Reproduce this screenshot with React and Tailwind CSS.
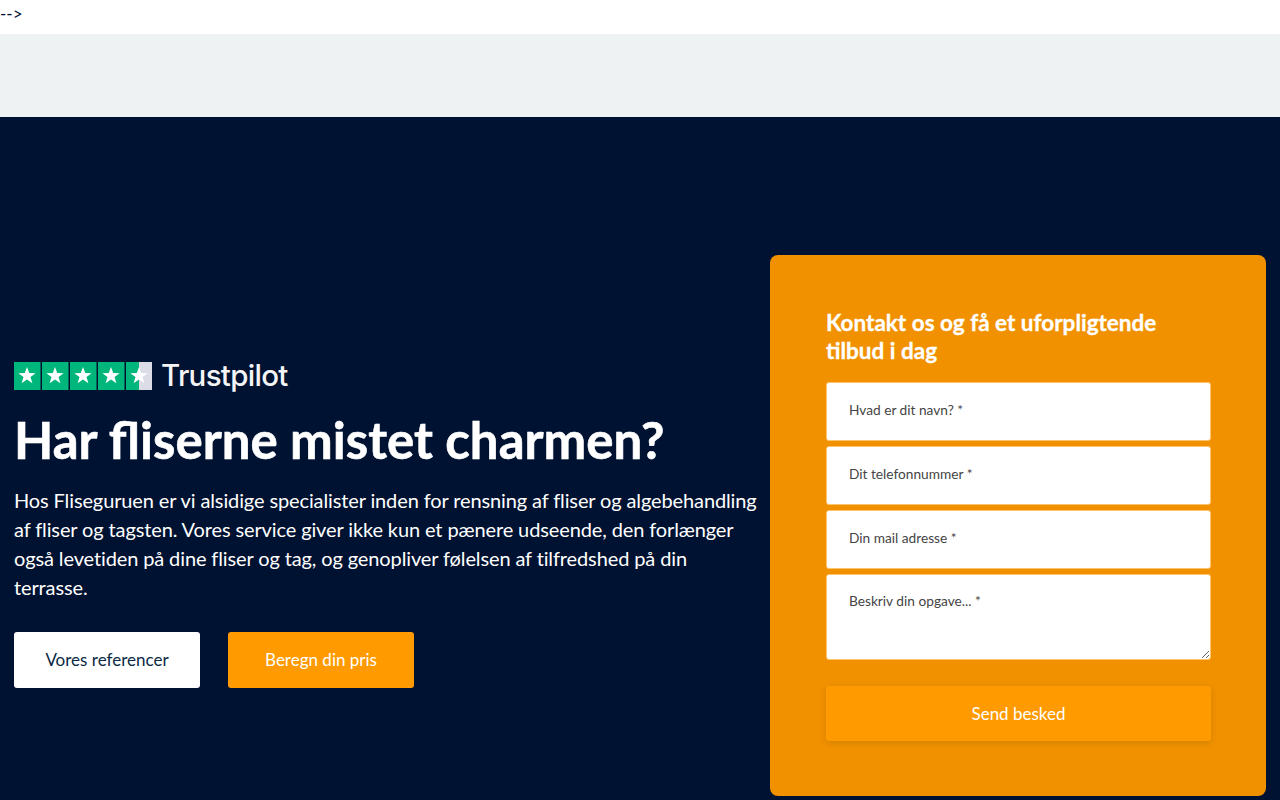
import React from 'react';

const STAR = 'M0 -9 L2.2 -2.9 L8.6 -2.8 L3.5 1.1 L5.4 7.3 L0 3.6 L-5.4 7.3 L-3.5 1.1 L-8.6 -2.8 L-2.2 -2.9 Z';

const TrustpilotStars = () => (
  <svg width="138" height="28" viewBox="0 0 138 28" className="block">
    {[0, 28, 56, 84, 112].map((x) => (
      <g key={x}>
        <rect x={x} y="0" width="26.5" height="28" fill="#00b67a" />
        {x === 112 && <rect x="125" y="0" width="13" height="28" fill="#dcdce6" />}
        <path d={STAR} transform={`translate(${x + 13} 14)`} fill="#fff" />
      </g>
    ))}
  </svg>
);

const Field = ({ placeholder }) => (
  <input
    type="text"
    placeholder={placeholder}
    className="block w-full h-[59px] px-[22px] pb-[5px] bg-white rounded-[3px] border border-[#ffc56b] text-[13.7px] outline-none placeholder:text-[#444444]"
  />
);

export default function App() {
  return (
    <div className="font-['Lato',sans-serif] text-[#001231]">
      <div className="h-[34px] bg-white text-[17px] leading-[28px]">--&gt;</div>
      <div className="h-[83px] bg-[#eef2f3]"></div>

      <section className="bg-[#001231] flex items-center pl-[14px] pr-[14px] pt-[138px] pb-[50px]">
        <div className="w-[756px] shrink-0 pb-[2px] text-white">
          <div className="flex items-center gap-[9px] h-[28px]">
            <TrustpilotStars />
            <span className="font-['Inter',sans-serif] font-medium text-[29.5px] leading-none tracking-[-0.7px] text-[#f4f4f6]">Trustpilot</span>
          </div>
          <h1 className="mt-[21px] text-[51px] leading-[58px] font-bold [-webkit-text-stroke:0.6px_white]">Har fliserne mistet charmen?</h1>
          <p className="mt-[17px] w-[746px] text-[20px] leading-[29px] tracking-[-0.12px]">
            Hos Fliseguruen er vi alsidige specialister inden for rensning af fliser og algebehandling af fliser og tagsten. Vores service giver ikke kun et pænere udseende, den forlænger også levetiden på dine fliser og tag, og genopliver følelsen af tilfredshed på din terrasse.
          </p>
          <div className="mt-[30px] flex gap-[28px]">
            <a className="w-[186px] h-[56px] flex items-center justify-center bg-white text-[#0b2a45] rounded-[3px] text-[17px]">Vores referencer</a>
            <a className="w-[186px] h-[56px] flex items-center justify-center bg-[#ff9a00] text-white rounded-[3px] text-[17px]">Beregn din pris</a>
          </div>
        </div>

        <div className="w-[496px] h-[541px] shrink-0 bg-[#f19100] rounded-[8px] pl-[56px] pr-[55px] pt-[54px]">
          <h2 className="text-[22.5px] leading-[28px] font-bold text-white [-webkit-text-stroke:0.3px_white]">Kontakt os og få et uforpligtende tilbud i dag</h2>
          <form className="mt-[17px] flex flex-col gap-[5px]">
            <Field placeholder="Hvad er dit navn? *" />
            <Field placeholder="Dit telefonnummer *" />
            <Field placeholder="Din mail adresse *" />
            <textarea
              placeholder="Beskriv din opgave... *"
              className="block w-full h-[86px] px-[22px] py-[15px] bg-white rounded-[3px] border border-[#ffc56b] text-[13.7px] leading-[22px] outline-none placeholder:text-[#444444]"
            />
            <button type="button" className="mt-[21px] w-full h-[55px] bg-[#ff9a00] text-white rounded-[3px] text-[17px] shadow-[0_2px_6px_rgba(0,0,0,0.12)]">Send besked</button>
          </form>
        </div>
      </section>
    </div>
  );
}
